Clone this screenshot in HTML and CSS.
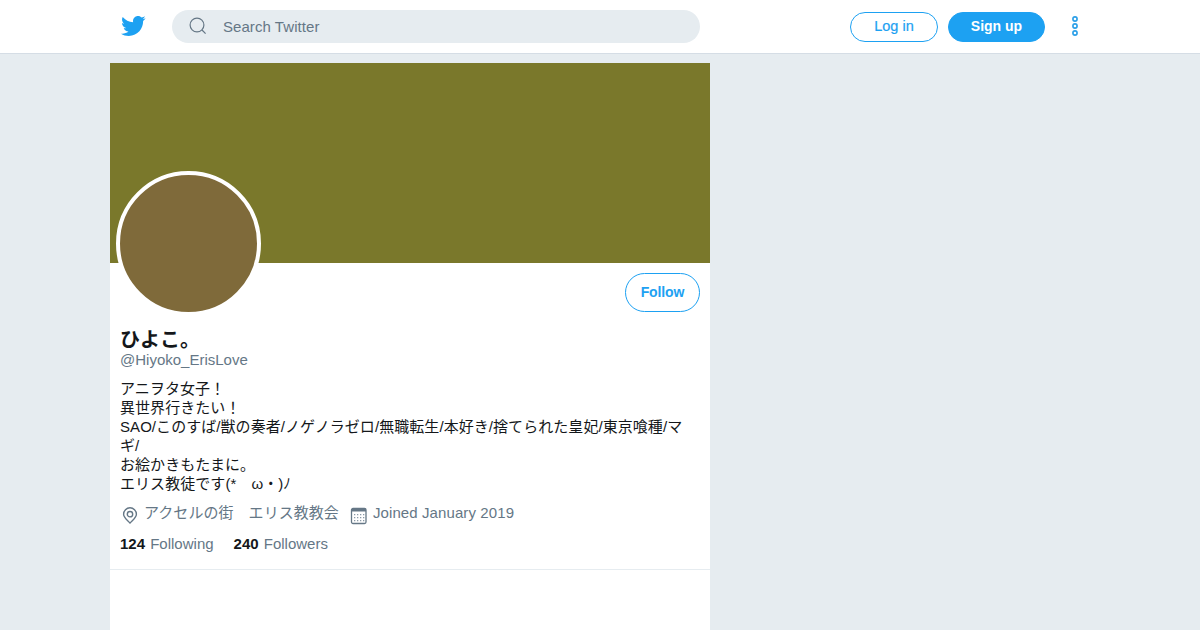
FILE: index.html
```html
<!DOCTYPE html>
<html>
	<head>
		<meta charset="utf-8">
		<title>ひよこ。 on Twitter</title>
		<link rel="stylesheet" href="styles.css">
	</head>
	<body>
		<header class="topbar">
			<svg class="bird" viewBox="0 0 24 24"><path d="M23.643 4.937c-.835.37-1.732.62-2.675.733.962-.576 1.7-1.49 2.048-2.578-.9.534-1.897.922-2.958 1.13-.85-.904-2.06-1.47-3.4-1.47-2.572 0-4.658 2.086-4.658 4.66 0 .364.042.718.12 1.06-3.873-.195-7.304-2.05-9.602-4.868-.4.69-.63 1.49-.63 2.342 0 1.616.823 3.043 2.072 3.878-.764-.025-1.482-.234-2.11-.583v.06c0 2.257 1.605 4.14 3.737 4.568-.392.106-.803.162-1.227.162-.3 0-.593-.028-.877-.082.593 1.85 2.313 3.198 4.352 3.234-1.595 1.25-3.604 1.995-5.786 1.995-.376 0-.747-.022-1.112-.065 2.062 1.323 4.51 2.093 7.14 2.093 8.57 0 13.255-7.098 13.255-13.254 0-.2-.005-.402-.014-.602.91-.658 1.7-1.477 2.323-2.41z"/></svg>
			<div class="search">
				<svg class="search-icon" viewBox="0 0 18 18"><circle cx="8" cy="8" r="6.9"/><path d="M13 13l3.6 3.6"/></svg>
				<span>Search Twitter</span>
			</div>
			<div class="actions">
				<a class="btn login" href="javascript:;">Log in</a>
				<a class="btn signup" href="javascript:;">Sign up</a>
				<svg class="more" viewBox="0 0 8 22"><circle cx="4" cy="4" r="2.1"/><circle cx="4" cy="11" r="2.1"/><circle cx="4" cy="18" r="2.1"/></svg>
			</div>
		</header>
		<main class="card">
			<div class="cover"></div>
			<div class="profile">
				<div class="top-row">
					<div class="avatar"></div>
					<a class="follow" href="javascript:;">Follow</a>
				</div>
				<h1 class="name">ひよこ。</h1>
				<div class="handle">@Hiyoko_ErisLove</div>
				<p class="bio">アニヲタ女子！<br>異世界行きたい！<br>SAO/このすば/獣の奏者/ノゲノラゼロ/無職転生/本好き/捨てられた皇妃/東京喰種/マギ/<br>お絵かきもたまに。<br>エリス教徒です(*　ω・)ﾉ</p>
				<div class="meta">
					<svg class="pin" viewBox="0 0 16 18"><path d="M8 .8a6.400 6.400 0 0 0-6.400 6.400c0 3.400 3.800 5.800 6.400 8.800 2.600-3 6.400-5.400 6.400-8.800A6.400 6.400 0 0 0 8 .8z"/><circle cx="8" cy="7.200" r="2.700"/></svg>
					<span class="place">アクセルの街　エリス教教会</span>
					<svg class="cal" viewBox="0 0 18 18"><rect x="1.500" y="1.500" width="14.500" height="15" rx="1.500"/><path class="cal-bar" d="M1.500 2h14.500v2.500H1.500z"/><path class="cal-dots" d="M4 7h1.300v1.300H4zM7 7h1.300v1.300H7zM10 7h1.300v1.300H10zM13 7h1.300v1.300H13zM4 10h1.300v1.300H4zM7 10h1.300v1.300H7zM10 10h1.300v1.300H10zM13 10h1.300v1.300H13zM4 13h1.300v1.300H4zM7 13h1.300v1.300H7zM10 13h1.300v1.300H10zM13 13h1.300v1.300H13z"/></svg>
					<span class="joined">Joined January 2019</span>
				</div>
				<div class="stats">
					<span class="stat"><b>124</b> Following</span>
					<span class="stat"><b>240</b> Followers</span>
				</div>
			</div>
		</main>
	</body>
</html>
```

FILE: styles.css
```css
*{
	margin:0;
	padding:0;
	box-sizing:border-box;
}
html,body{
	height:630px;
	overflow:hidden;
}
body{
	background:#e6ecf0;
	font-family:"Liberation Sans","Noto Sans CJK JP",sans-serif;
	color:#14171a;
}
a{
	text-decoration:none;
}
.topbar{
	display:flex;
	align-items:center;
	height:54px;
	padding:0 120px;
	background:#fff;
	border-bottom:1px solid #d5dde5;
}
.bird{
	width:26px;
	height:26px;
	margin-top:-1px;
	fill:#1da1f2;
	margin-right:26px;
}
.search{
	display:flex;
	align-items:center;
	width:528px;
	height:33px;
	padding-left:17px;
	border-radius:17px;
	background:#e6ecf0;
	color:#657786;
	font-size:15px;
	letter-spacing:.06px;
}
.search-icon{
	width:18px;
	height:18px;
	margin:-1px 16px 0 0;
	fill:none;
	stroke:#657786;
	stroke-width:1.2;
}
.actions{
	display:flex;
	align-items:center;
	margin-left:auto;
}
.btn{
	display:flex;
	align-items:center;
	justify-content:center;
	height:30px;
	padding-bottom:2px;
	border-radius:15px;
	font-size:14px;
	font-weight:bold;
	border:1px solid #1da1f2;
}
.login{
	width:88px;
	color:#1da1f2;
	background:#fff;
	font-size:14.500px;
	font-weight:normal;
	-webkit-text-stroke:.2px #1da1f2;
}
.signup{
	width:97px;
	margin-left:10px;
	color:#fff;
	background:#1da1f2;
}
.more{
	width:8px;
	height:22px;
	margin:-1px 1px 0 26px;
	fill:none;
	stroke:#2a9fe8;
	stroke-width:1.6;
}
.card{
	width:600px;
	height:567px;
	margin:9px 0 0 110px;
	background:#fff;
}
.cover{
	height:200px;
	background:#7a782b;
}
.profile{
	height:307px;
	padding:0 10px;
	border-bottom:1px solid #e6ecf0;
}
.top-row{
	display:flex;
	justify-content:space-between;
	align-items:flex-start;
	height:66px;
}
.avatar{
	width:145px;
	height:145px;
	margin:-92px 0 0 -4px;
	border:4px solid #fff;
	border-radius:50%;
	background:#7f6a3a;
}
.follow{
	display:flex;
	align-items:center;
	justify-content:center;
	width:75px;
	height:39px;
	margin-top:10px;
	padding-bottom:2px;
	border:1px solid #1da1f2;
	border-radius:20px;
	color:#1da1f2;
	font-size:14px;
	font-weight:bold;
	letter-spacing:-.1px;
}
.name{
	font-size:20px;
	line-height:22px;
	font-weight:bold;
}
.handle{
	margin-top:-1px;
	font-size:15px;
	line-height:19px;
	color:#657786;
}
.bio{
	margin-top:10px;
	font-size:15px;
	line-height:19px;
	letter-spacing:.06px;
	color:#14171a;
}
.meta{
	display:flex;
	align-items:flex-start;
	margin-top:10px;
	font-size:15px;
	line-height:20px;
	color:#657786;
}
.pin{
	width:16px;
	height:18px;
	margin:4px 6px 0 2px;
	fill:none;
	stroke:#657786;
	stroke-width:1.400;
}
.place{
	letter-spacing:.05px;
}
.cal{
	width:18px;
	height:18px;
	margin:4px 5px 0 11px;
	fill:none;
	stroke:#657786;
	stroke-width:1.300;
}
.cal-bar{
	fill:#657786;
	stroke:none;
}
.cal-dots{
	fill:#8a99a6;
	stroke:none;
}
.joined{
	letter-spacing:.1px;
}
.stats{
	display:flex;
	gap:20px;
	margin-top:9px;
	font-size:15px;
	line-height:20px;
	color:#657786;
}
.stat b{
	margin-right:1px;
	color:#14171a;
}
```
